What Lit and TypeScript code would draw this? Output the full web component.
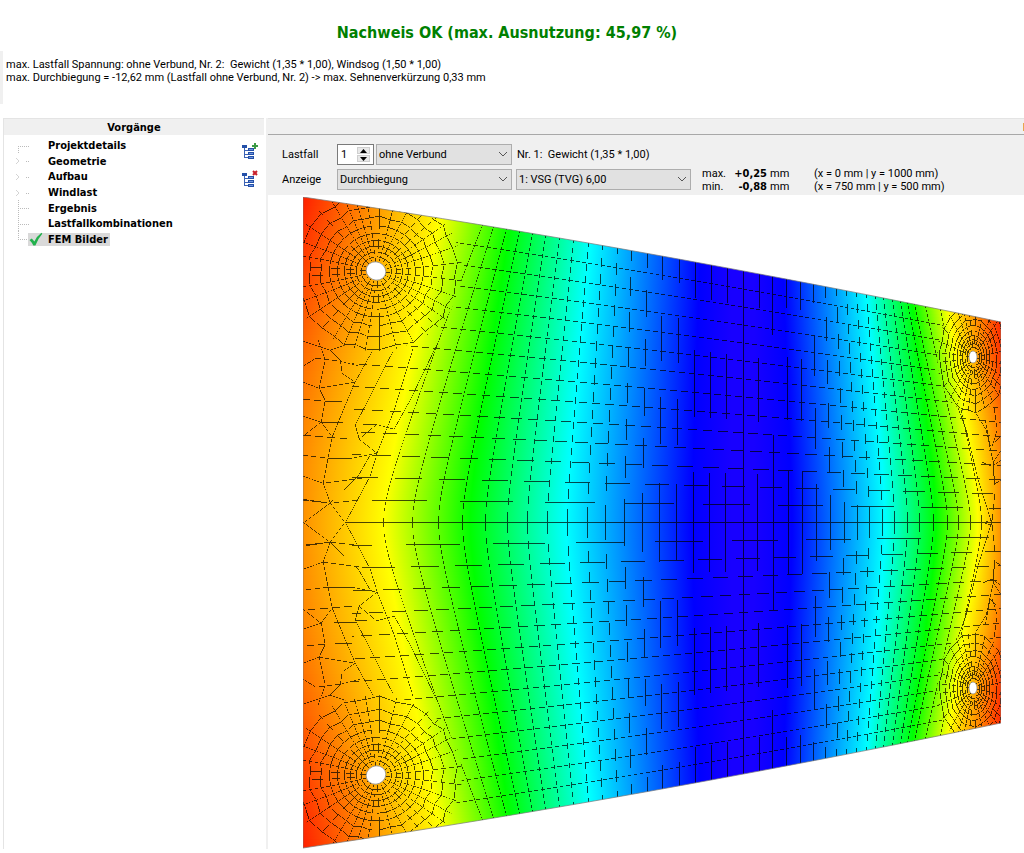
import { LitElement, html, css, svg } from "lit";
import { customElement, property, state } from "lit/decorators.js";

type Point = [number, number];

const LEFT = 303;
const RIGHT = 1001;
const TOP = 197;
const BOTTOM = 848;
const AXIS = 522.5;

/** Half height of the deflected plate at x. */
const half = (x: number) => {
  const t = (x - LEFT) / (RIGHT - LEFT);
  return 325.5 - 125 * t + 21 * t * (1 - t);
};

/** Share of the way from the symmetry axis to the plate edge, eased near the axis. */
const ease = (t: number) => (Math.sqrt(t * t + 0.01) - 0.1) / 0.905;

/**
 * One-pixel wide trace of a polyline. Pixels are drawn only where the line
 * passes through the first part of a pixel, which gives thin broken strokes.
 */
function trace(points: Point[], keep = 0.62): string {
  let d = "";
  for (let i = 1; i < points.length; i++) {
    let [x0, y0] = points[i - 1];
    let [x1, y1] = points[i];
    const flat = Math.abs(x1 - x0) >= Math.abs(y1 - y0);
    if (!flat) [x0, y0, x1, y1] = [y0, x0, y1, x1];
    if (x0 > x1) [x0, y0, x1, y1] = [x1, y1, x0, y0];
    let start = 0;
    let run = 0;
    let level = 0;
    const flush = () => {
      if (run > 0) d += flat ? `M${start} ${level}.5h${run}` : `M${level}.5 ${start}v${run}`;
      run = 0;
    };
    for (let m = Math.round(x0); m < Math.round(x1); m++) {
      const n = y0 + ((y1 - y0) * (m + 0.5 - x0)) / (x1 - x0);
      const base = Math.floor(n);
      if (n - base > keep) {
        flush();
        continue;
      }
      if (run && base === level) run++;
      else {
        flush();
        start = m;
        level = base;
        run = 1;
      }
    }
    flush();
  }
  return d;
}

const mirror = (points: Point[]): Point[] => points.map(([x, y]) => [x, 2 * AXIS - y]);

/** Mesh columns: x on the symmetry axis and x on the plate edge. */
const COLUMNS: Point[] = [
  [383, 482], [412, 493], [438, 506], [462, 519], [485, 532], [507, 545], [527, 559],
  [547, 573], [567, 588], [587, 602], [605, 617], [624, 631], [642, 647], [659, 662],
  [676, 679], [693, 695], [709, 711], [725, 727], [743, 743], [757, 759], [773, 772],
  [788, 786], [802, 800], [816, 813], [830, 825], [844, 836], [857, 846], [869, 856],
  [882, 866], [894, 875], [907, 883], [919, 892], [933, 900], [947, 907], [958, 914],
  [970, 925], [981, 940],
];

function regularMesh(): string {
  let d = "";
  for (const [axis, edge] of COLUMNS) {
    const line: Point[] = [];
    for (let k = 0; k <= 28; k++) {
      const t = k / 28;
      const x = axis + 0.3 + (edge - axis) * ease(t);
      line.push([x, AXIS - half(x) * t]);
    }
    d += trace(line, 0.56) + trace(mirror(line), 0.56);
  }
  for (let k = 0; k < 14; k++) {
    const line: Point[] = [];
    const from = k === 0 ? 345 : 352;
    for (let x = from; x < RIGHT; x += 8) {
      line.push([x, AXIS - (half(x) * k) / 14]);
    }
    line.push([RIGHT, AXIS - (half(RIGHT) * k) / 14]);
    d += trace(line);
    if (k) d += trace(mirror(line));
  }
  return d;
}

/** Irregular elements along the left edge, upper half. */
const LEFT_EDGE: Point[][] = [
  [[303, 523], [330, 503], [345, 523], [370, 476], [377, 453], [359, 439], [355, 425], [375, 424], [394, 429]],
  [[359, 439], [377, 424]],
  [[303, 499], [330, 503], [323, 483], [332, 437], [346, 403], [355, 382], [342, 373], [340, 360], [330, 350]],
  [[303, 500], [330, 503], [358, 500]],
  [[330, 503], [358, 476], [370, 455]],
  [[303, 476], [323, 483], [370, 477]],
  [[303, 455], [328, 458], [352, 458], [377, 453]],
  [[303, 435], [352, 439]],
  [[303, 436], [321, 422], [332, 437]],
  [[303, 416], [321, 422], [325, 400], [319, 388], [325, 360], [318, 340]],
  [[303, 382], [319, 388], [355, 382]],
  [[303, 399], [325, 401], [352, 402]],
  [[319, 388], [325, 401]],
  [[321, 422], [356, 423]],
  [[303, 366], [316, 358], [340, 361], [360, 366]],
  [[303, 341], [330, 350], [348, 344]],
  [[355, 382], [366, 362], [375, 346]],
  [[355, 425], [367, 402], [383, 370], [393, 351]],
  [[394, 429], [410, 400], [438, 342]],
  [[377, 453], [394, 410], [413, 348]],
];

/** Irregular elements along the right edge, upper half. */
const RIGHT_EDGE: Point[][] = [
  [[992, 523], [990, 518], [978, 480], [966, 430], [955, 400]],
  [[981, 523], [992, 520], [995, 490], [993, 462], [986, 430], [975, 412]],
  [[1001, 480], [994, 484], [993, 462], [1001, 450]],
  [[1001, 460], [992, 466], [982, 462]],
  [[1001, 436], [990, 446], [985, 420]],
  [[992, 446], [997, 430], [994, 408]],
];

/** Rings and spokes of the radial mesh around a drill hole. */
function holeMesh(cx: number, cy: number, sx: number, sy: number, radii: number[], spokes: number): string {
  const outer = radii[radii.length - 1];
  const at = (r: number, a: number): Point => [
    cx + 0.3 + Math.cos(a) * r * sx,
    cy + 0.3 + Math.sin(a) * r * sy,
  ];
  const angle = (k: number, r: number) => {
    const a = ((k + 0.5) / spokes) * Math.PI * 2;
    return a + 0.05 * (r / outer) * Math.sin(5 * a);
  };
  let d = "";
  radii.forEach((r) => {
    const ring: Point[] = [];
    for (let k = 0; k <= spokes; k++) {
      const wobble = r > outer * 0.6 ? 1 + 0.025 * Math.sin(k * 2.4) : 1;
      ring.push(at(r * wobble, angle(k, r)));
    }
    d += trace(ring, 0.8);
  });
  for (let k = 0; k < spokes; k++) {
    const line: Point[] = [];
    for (const r of [k % 2 ? radii[1] : 10, radii[3], radii[5], outer + 16]) line.push(at(r, angle(k, r)));
    d += trace(line, 0.55);
  }
  return d;
}

/** Piecewise linear lookup; knots are [distance from axis, value]. */
function lookup(knots: Point[], d: number): number {
  for (let i = 1; i < knots.length; i++) {
    if (d <= knots[i][0]) {
      const [a, va] = knots[i - 1];
      const [b, vb] = knots[i];
      return va + ((vb - va) * (d - a)) / (b - a);
    }
  }
  return knots[knots.length - 1][1];
}

const EDGE_LEFT: Point[] = [[0, 145], [50, 141], [100, 132], [165, 108], [250, 66], [325, 32]];
const EDGE_RIGHT: Point[] = [[0, 145], [40, 142], [70, 135], [110, 105], [165, 55], [200, 42]];

/** Isolines: colour, x on the axis, x at the far end of the plate. */
const ISOLINES: [string, number, number][] = [
  ["#ff0", 384, 444],
  ["#0f0", 470, 514],
  ["#0ff", 566, 595],
  ["#00f", 692, 702],
  ["#1800ff", 732, 732],
  ["#1800ff", 754, 754],
  ["#00f", 792, 780],
  ["#0ff", 885, 858],
  ["#0f0", 936, 899],
  ["#ff0", 978, 930],
];

const BAND = 3;

const colourRows = () => {
  const rows = [];
  for (let y = TOP; y < BOTTOM; y += BAND) {
    const d = Math.abs(y + BAND / 2 - AXIS);
    const stops: [number, string][] = [
      [LEFT, `rgb(255,${Math.round(lookup(EDGE_LEFT, d))},0)`],
      ...ISOLINES.map(([c, axis, end]): [number, string] => [axis + (end - axis) * ease(d / 325), c]),
      [RIGHT, `rgb(255,${Math.round(lookup(EDGE_RIGHT, d))},0)`],
    ];
    rows.push(svg`
      <linearGradient id="row${y}" gradientUnits="userSpaceOnUse" x1=${LEFT} x2=${RIGHT} y1="0" y2="0">
        ${stops.map(([x, c]) => svg`<stop offset=${(x - LEFT) / (RIGHT - LEFT)} stop-color=${c}></stop>`)}
      </linearGradient>
      <rect x=${LEFT} y=${y} width=${RIGHT - LEFT} height=${BAND} fill="url(#row${y})"></rect>`);
  }
  return rows;
};

const outline = () => {
  const top: Point[] = [];
  for (let i = 0; i <= 20; i++) {
    const x = LEFT + ((RIGHT - LEFT) * i) / 20;
    top.push([x, AXIS - half(x)]);
  }
  return "M" + [...top, ...mirror(top).reverse()].map((p) => p.join(" ")).join("L") + "Z";
};

const HOLES = [
  { x: 376, y: 271, rx: 10, ry: 9, tilt: 25 },
  { x: 376, y: 775, rx: 10, ry: 9, tilt: -25 },
  { x: 973, y: 357, rx: 4, ry: 6, tilt: 0 },
  { x: 973, y: 688, rx: 4, ry: 6, tilt: 0 },
];
const RINGS = [15, 20, 26, 32, 39, 47, 56, 67, 80];

@customElement("fem-plot")
export class FemPlot extends LitElement {
  static styles = css`
    :host { display: block; }
    .plot { display: block; width: 100%; height: auto; }
    .mesh { stroke: #000; stroke-opacity: 0.7; fill: none; shape-rendering: crispEdges; }
    .edge { stroke: #777; stroke-opacity: 0.7; fill: none; }
    .hole { fill: #fff; stroke: #888; stroke-width: 0.7; }
  `;

  render() {
    const edge = outline();
    const irregular = [...LEFT_EDGE, ...RIGHT_EDGE].map((l) => trace(l) + trace(mirror(l))).join("");
    const holes = HOLES.map((h) =>
      h.x < 500 ? holeMesh(h.x, h.y, 1, 0.97, RINGS, 36) : holeMesh(h.x, h.y, 0.42, 0.68, RINGS, 28)
    ).join("");
    return html`
      <svg class="plot" viewBox="303 197 698 652" role="img" aria-label="Durchbiegung">
        <defs>
          <clipPath id="plate"><path d=${edge}></path></clipPath>
          <clipPath id="zones">
            ${HOLES.map((h) => svg`<ellipse cx=${h.x} cy=${h.y} rx=${h.x < 500 ? 86 : 36} ry=${h.x < 500 ? 80 : 56}></ellipse>`)}
          </clipPath>
          <mask id="outside" maskUnits="userSpaceOnUse" x="303" y="197" width="698" height="652">
            <rect x="303" y="197" width="698" height="652" fill="#fff"></rect>
            ${HOLES.map((h) => svg`<ellipse cx=${h.x} cy=${h.y} rx=${h.x < 500 ? 86 : 36} ry=${h.x < 500 ? 80 : 56} fill="#000"></ellipse>`)}
          </mask>
        </defs>
        <g clip-path="url(#plate)">
          <g shape-rendering="crispEdges">${colourRows()}</g>
          <path class="mesh" mask="url(#outside)" d=${regularMesh() + irregular}></path>
          <g clip-path="url(#zones)"><path class="mesh" d=${holes}></path></g>
        </g>
        <path class="edge" d=${edge}></path>
        ${HOLES.map((h) => svg`<ellipse class="hole" cx=${h.x} cy=${h.y} rx=${h.rx} ry=${h.ry} transform="rotate(${h.tilt} ${h.x} ${h.y})"></ellipse>`)}
      </svg>
    `;
  }
}

const treeGlyph = svg`
  <path d="M2.5 4v11M2.500 7.500h4M2.500 11.500h4M2.500 14.500h4" stroke="#3a62b5" fill="none"></path>
  <g fill="#2450a8">
    <rect x="0" y="2" width="5" height="3"></rect>
    <rect x="6" y="5" width="6" height="3"></rect>
    <rect x="6" y="9" width="6" height="3"></rect>
    <rect x="6" y="13" width="6" height="3"></rect>
  </g>
  <path d="M7 6.500h4M7 10.500h4M7 14.500h4" stroke="#6f93dc"></path>`;

@customElement("process-tree")
export class ProcessTree extends LitElement {
  @property({ attribute: false }) items: { name: string; expandable: boolean }[] = [];
  @state() private current = "FEM Bilder";

  static styles = css`
    :host { display: flex; justify-content: space-between; padding: 3px 6px 0 8px; }
    .list { list-style: none; margin: 0; padding: 0; height: 109px; display: grid; grid-template-rows: repeat(7, minmax(0, 1fr)); }
    .item { display: flex; align-items: center; }
    .guide { width: 16px; height: 16px; flex: none; overflow: visible; }
    .entry {
      display: flex; align-items: center; border: 0; margin: 0; padding: 0 2px 0 0; height: 13px;
      background: none; font: inherit; font-weight: bold; color: #000;
    }
    .current { background: #d9d9d9; }
    .mark { width: 20px; height: 14px; flex: none; overflow: visible; }
    .tools { display: flex; flex-direction: column; gap: 12px; padding-top: 5px; }
    .tool { border: 0; padding: 0; background: none; width: 16px; height: 16px; display: block; }
    .glyph { display: block; width: 16px; height: 16px; overflow: visible; }
  `;

  private guide(expandable: boolean, index: number) {
    const last = index === this.items.length - 1;
    if (expandable)
      return svg`<path d="M4 5l3 3-3 3" fill="none" stroke="#d4d4d4"></path>
        <path d="M14 8.500h3" stroke="#bbb" stroke-dasharray="1 1"></path>`;
    const down = index === 0 ? "M6.500 8v8" : last ? "M6.500 0v8" : "M6.500 0v16";
    return svg`<path d="${down}M6 8.500h11" fill="none" stroke="#bbb" stroke-dasharray="1 1"></path>`;
  }

  render() {
    return html`
      <ul class="list">
        ${this.items.map(
          (item, i) => html`
            <li class="item">
              <svg class="guide" viewBox="0 0 16 16">${this.guide(item.expandable, i)}</svg>
              <button
                class="entry ${item.name === this.current ? "current" : ""}"
                @click=${() => (this.current = item.name)}
              >
                <svg class="mark" viewBox="0 0 20 14">
                  ${item.name === this.current
                    ? svg`<path d="M1.500 8l2.300-1.600 2.600 3Q9 4 13.500 .8l.8.9Q10 6.500 7.400 13.500H5.300Q4 10.500 1.500 8z" fill="#22b14c"></path>`
                    : ""}
                </svg>
                ${item.name}
              </button>
            </li>
          `
        )}
      </ul>
      <div class="tools">
        <button class="tool" aria-label="Baum erweitern">
          <svg class="glyph" viewBox="0 0 16 16">
            ${treeGlyph}<path d="M13 0v6M10 3h6" stroke="#3c9a45" stroke-width="2"></path>
          </svg>
        </button>
        <button class="tool" aria-label="Baum reduzieren">
          <svg class="glyph" viewBox="0 0 16 16">
            ${treeGlyph}<path d="M11 0l4 4M15 0l-4 4" stroke="#c8202c" stroke-width="2"></path>
          </svg>
        </button>
      </div>
    `;
  }
}

@customElement("app-root")
export class AppRoot extends LitElement {
  @state() private loadCase = 1;

  private items = [
    { name: "Projektdetails", expandable: false },
    { name: "Geometrie", expandable: true },
    { name: "Aufbau", expandable: true },
    { name: "Windlast", expandable: true },
    { name: "Ergebnis", expandable: false },
    { name: "Lastfallkombinationen", expandable: false },
    { name: "FEM Bilder", expandable: false },
  ];

  static styles = css`
    :host {
      display: block; background: #fff; color: #000;
      font: 11px/13px Tahoma, Roboto, sans-serif;
    }
    .headline, .side, .value { font-family: Tahoma, "DejaVu Sans Condensed", sans-serif; }
    .verdict { height: 51px; display: flex; align-items: center; justify-content: center; padding: 14px 10px 0 0; box-sizing: border-box; }
    .headline { margin: 0; font-size: 16px; line-height: 20px; color: #008000; }
    .summary { border-left: 3px solid #f0f0f0; padding: 7px 0 20px 3px; margin-bottom: 14px; white-space: pre-wrap; }
    .line { margin: 0; }
    .main { display: grid; grid-template-columns: 261px minmax(0, 1fr); gap: 2px; padding-left: 3px; }
    .side { border-left: 1px solid #e4e4e4; }
    .bar { box-sizing: border-box; height: 17px; background: #f0f0f0; border-top: 1px solid #e4e4e4; }
    .title { margin: 0; font-size: 11px; line-height: 17px; text-align: center; }
    .content { border-left: 2px solid #f0f0f0; }
    .strip { border-bottom: 1px solid #a8a8a8; display: flex; justify-content: flex-end; padding-top: 4px; }
    .pin { width: 1px; height: 8px; background: #e8a54c; }
    .tools { background: #f0f0f0; padding: 9px 0 5px 14px; display: flex; flex-direction: column; gap: 4px; }
    .row { display: flex; align-items: center; height: 21px; }
    .label { width: 55px; flex: none; }
    .spin { display: flex; align-items: center; box-sizing: border-box; width: 37px; height: 21px; border: 1px solid #7a7a7a; background: #fff; padding-right: 3px; margin-right: 2px; }
    .number { appearance: textfield; -moz-appearance: textfield; flex: 1; min-width: 0; border: 0; padding: 0 0 0 3px; background: none; font: inherit; outline: 0; }
    .number::-webkit-inner-spin-button { appearance: none; display: none; }
    .steps { display: flex; flex-direction: column; gap: 1px; }
    .step { width: 13px; height: 7px; border: 1px solid #cfcfcf; padding: 0; background: #e8e8e8; display: flex; justify-content: center; align-items: center; box-sizing: border-box; }
    .arrow { width: 7px; height: 4px; display: block; flex: none; }
    .picker { position: relative; display: flex; height: 21px; }
    .wide { width: 175px; }
    .narrow { width: 136px; }
    .select { appearance: none; width: 100%; border: 1px solid #adadad; border-radius: 0; background: #e1e1e1; font: inherit; color: #000; padding: 0 20px 0 2px; }
    .chevron { position: absolute; right: 4px; top: 7px; width: 10px; height: 7px; pointer-events: none; }
    .case { margin-left: 5px; white-space: pre; }
    .second { margin-left: 4px; }
    .values { border-collapse: collapse; margin-left: 11px; }
    .cell { padding: 0; text-align: left; font-weight: normal; line-height: 13px; white-space: nowrap; }
    .kind { width: 28px; }
    .value { width: 37px; text-align: right; font-weight: bold; }
    .unit { width: 44px; padding-left: 3px; }
    .figure { padding: 2px 23px 0 35px; }
  `;

  private chevron() {
    return html`<svg class="chevron" viewBox="0 0 10 7"><path d="M1 1l4 4 4-4" fill="none" stroke="#555"></path></svg>`;
  }

  render() {
    return html`
      <header>
        <div class="verdict"><h1 class="headline">Nachweis OK (max. Ausnutzung: 45,97 %)</h1></div>
        <div class="summary"><p class="line">max. Lastfall Spannung: ohne Verbund, Nr. 2:  Gewicht (1,35 * 1,00), Windsog (1,50 * 1,00)</p><p class="line">max. Durchbiegung = -12,62 mm (Lastfall ohne Verbund, Nr. 2) -> max. Sehnenverkürzung 0,33 mm</p></div>
      </header>
      <main class="main">
        <nav class="side">
          <div class="bar"><h2 class="title">Vorgänge</h2></div>
          <process-tree .items=${this.items}></process-tree>
        </nav>
        <section class="content">
          <div class="bar strip"><span class="pin"></span></div>
          <div class="tools">
            <div class="row">
              <label class="label" for="case">Lastfall</label>
              <div class="spin">
                <input class="number" id="case" type="number" min="1" .value=${String(this.loadCase)} />
                <div class="steps">
                  <button class="step" aria-label="Lastfall erhöhen" @click=${() => this.loadCase++}>
                    <svg class="arrow" viewBox="0 0 7 4"><path d="M0 4L3.500 0 7 4z"></path></svg>
                  </button>
                  <button class="step" aria-label="Lastfall verringern" @click=${() => (this.loadCase = Math.max(1, this.loadCase - 1))}>
                    <svg class="arrow" viewBox="0 0 7 4"><path d="M0 0L3.500 4 7 0z"></path></svg>
                  </button>
                </div>
              </div>
              <div class="picker narrow">
                <select class="select" aria-label="Verbund"><option>ohne Verbund</option></select>${this.chevron()}
              </div>
              <span class="case">Nr. 1:  Gewicht (1,35 * 1,00)</span>
            </div>
            <div class="row">
              <label class="label" for="view">Anzeige</label>
              <div class="picker wide">
                <select class="select" id="view"><option>Durchbiegung</option></select>${this.chevron()}
              </div>
              <div class="picker wide second">
                <select class="select" aria-label="Schicht"><option>1: VSG (TVG) 6,00</option></select>${this.chevron()}
              </div>
              <table class="values">
                <tr>
                  <th class="cell kind" scope="row">max.</th>
                  <td class="cell value">+0,25</td>
                  <td class="cell unit">mm</td>
                  <td class="cell">(x = 0 mm | y = 1000 mm)</td>
                </tr>
                <tr>
                  <th class="cell kind" scope="row">min.</th>
                  <td class="cell value">-0,88</td>
                  <td class="cell unit">mm</td>
                  <td class="cell">(x = 750 mm | y = 500 mm)</td>
                </tr>
              </table>
            </div>
          </div>
          <fem-plot class="figure"></fem-plot>
        </section>
      </main>
    `;
  }
}
